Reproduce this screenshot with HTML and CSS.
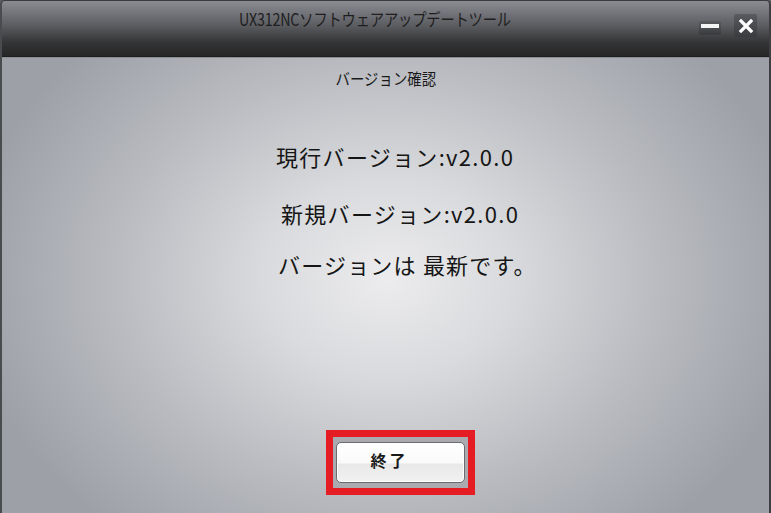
FILE: index.html
```html
<!DOCTYPE html>
<html lang="ja">
<head>
<meta charset="utf-8">
<link rel="stylesheet" href="styles.css">
</head>
<body>
<div class="window">
  <div class="titlebar">
    <div class="title">UX312NCソフトウェアアップデートツール</div>
    <div class="controls">
      <div class="ctl ctl-min"><span class="min-bar"></span></div>
      <div class="ctl ctl-close">
        <svg width="16" height="16" viewBox="0 0 16 16"><path d="M3 3 L13 13 M13 3 L3 13" stroke="#fff" stroke-width="3.2" stroke-linecap="square"/></svg>
      </div>
    </div>
  </div>
  <div class="content">
    <div class="subtitle">バージョン確認</div>
    <div class="info">
      <div class="line line-current">現行バージョン:v2.0.0</div>
      <div class="line line-new">新規バージョン:v2.0.0</div>
      <div class="line line-msg">バージョンは 最新です。</div>
    </div>
    <div class="footer">
      <div class="highlight">
        <button class="btn">終了</button>
      </div>
    </div>
  </div>
</div>
</body>
</html>
```

FILE: styles.css
```css
html, body {
  margin: 0;
  padding: 0;
  width: 771px;
  height: 513px;
  overflow: hidden;
  background: #5a5c60;
}
.window {
  width: 771px;
  height: 513px;
  box-sizing: border-box;
  border-left: 2px solid #4a4b4f;
  border-right: 2px solid #3e3f43;
  border-top: 1px solid #3a3b3e;
  border-top-left-radius: 5px;
  border-top-right-radius: 5px;
  overflow: hidden;
  display: flex;
  flex-direction: column;
  font-family: "Noto Sans CJK JP", "Liberation Sans", sans-serif;
  color: #111;
}
.titlebar {
  height: 55px;
  flex: none;
  position: relative;
  display: flex;
  justify-content: center;
  align-items: flex-start;
  background: linear-gradient(to bottom, #8a8c92 0%, #7a7c82 15%, #5b5c60 45%, #343536 75%, #262626 100%);
  border-bottom: 1px solid #1e1e1e;
}
.title {
  margin-top: 6px;
  margin-right: 22px;
  font-size: 17px;
  line-height: 24px;
  color: #1e1e20;
  transform: scaleX(0.84);
  white-space: nowrap;
  letter-spacing: -0.2px;
}
.controls {
  position: absolute;
  top: 13px;
  right: 12px;
  display: flex;
  align-items: flex-end;
  gap: 13px;
}
.ctl {
  display: flex;
  align-items: center;
  justify-content: center;
  background: linear-gradient(to bottom, #5a5b5f, #3a3b3e);
  border-radius: 2px;
}
.ctl-min {
  width: 22px;
  height: 14px;
  align-items: flex-start;
  margin-bottom: 2px;
}
.min-bar {
  display: block;
  width: 18px;
  height: 4px;
  margin-top: 3px;
  background: #f4f4f4;
}
.ctl-close {
  width: 23px;
  height: 23px;
}
.content {
  flex: 1;
  display: flex;
  flex-direction: column;
  align-items: center;
  background: radial-gradient(ellipse 420px 330px at 385px 220px, #ececee 0%, #d9dadd 30%, #b9bbc0 65%, #9da0a7 100%);
  border-top: 1px solid #8c8e94;
}
.subtitle {
  margin-top: 8px;
  font-size: 16px;
  line-height: 24px;
  transform: scaleX(0.9);
  color: #1a1a1a;
}
.info {
  align-self: stretch;
  display: flex;
  flex-direction: column;
  align-items: flex-start;
  padding-left: 274px;
  margin-top: 51px;
}
.line {
  font-size: 22px;
  line-height: 30px;
  letter-spacing: 1.3px;
  white-space: nowrap;
  color: #151515;
}
.line-new {
  margin-top: 27px;
  margin-left: 5px;
}
.line-msg {
  margin-top: 21px;
  margin-left: 2px;
  letter-spacing: 1.2px;
}
.footer {
  margin-top: auto;
  margin-bottom: 18px;
  display: flex;
  justify-content: center;
  padding-left: 30px;
}
.highlight {
  border: 7px solid #e51c24;
  padding: 5px 3px;
  background: #a9abb0;
  display: flex;
}
.btn {
  width: 129px;
  height: 41px;
  border: 1px solid #6b6c70;
  border-radius: 5px;
  background: linear-gradient(to bottom, #ffffff 0%, #fafafa 50%, #e8e8e8 55%, #f2f2f2 100%);
  box-shadow: inset 0 0 0 1px #ffffff;
  font-family: "Noto Sans CJK JP", sans-serif;
  font-size: 16px;
  font-weight: bold;
  color: #1a1a1a;
  letter-spacing: 3px;
  padding: 0 22px 6px 0;
  margin: 0;
}
```
